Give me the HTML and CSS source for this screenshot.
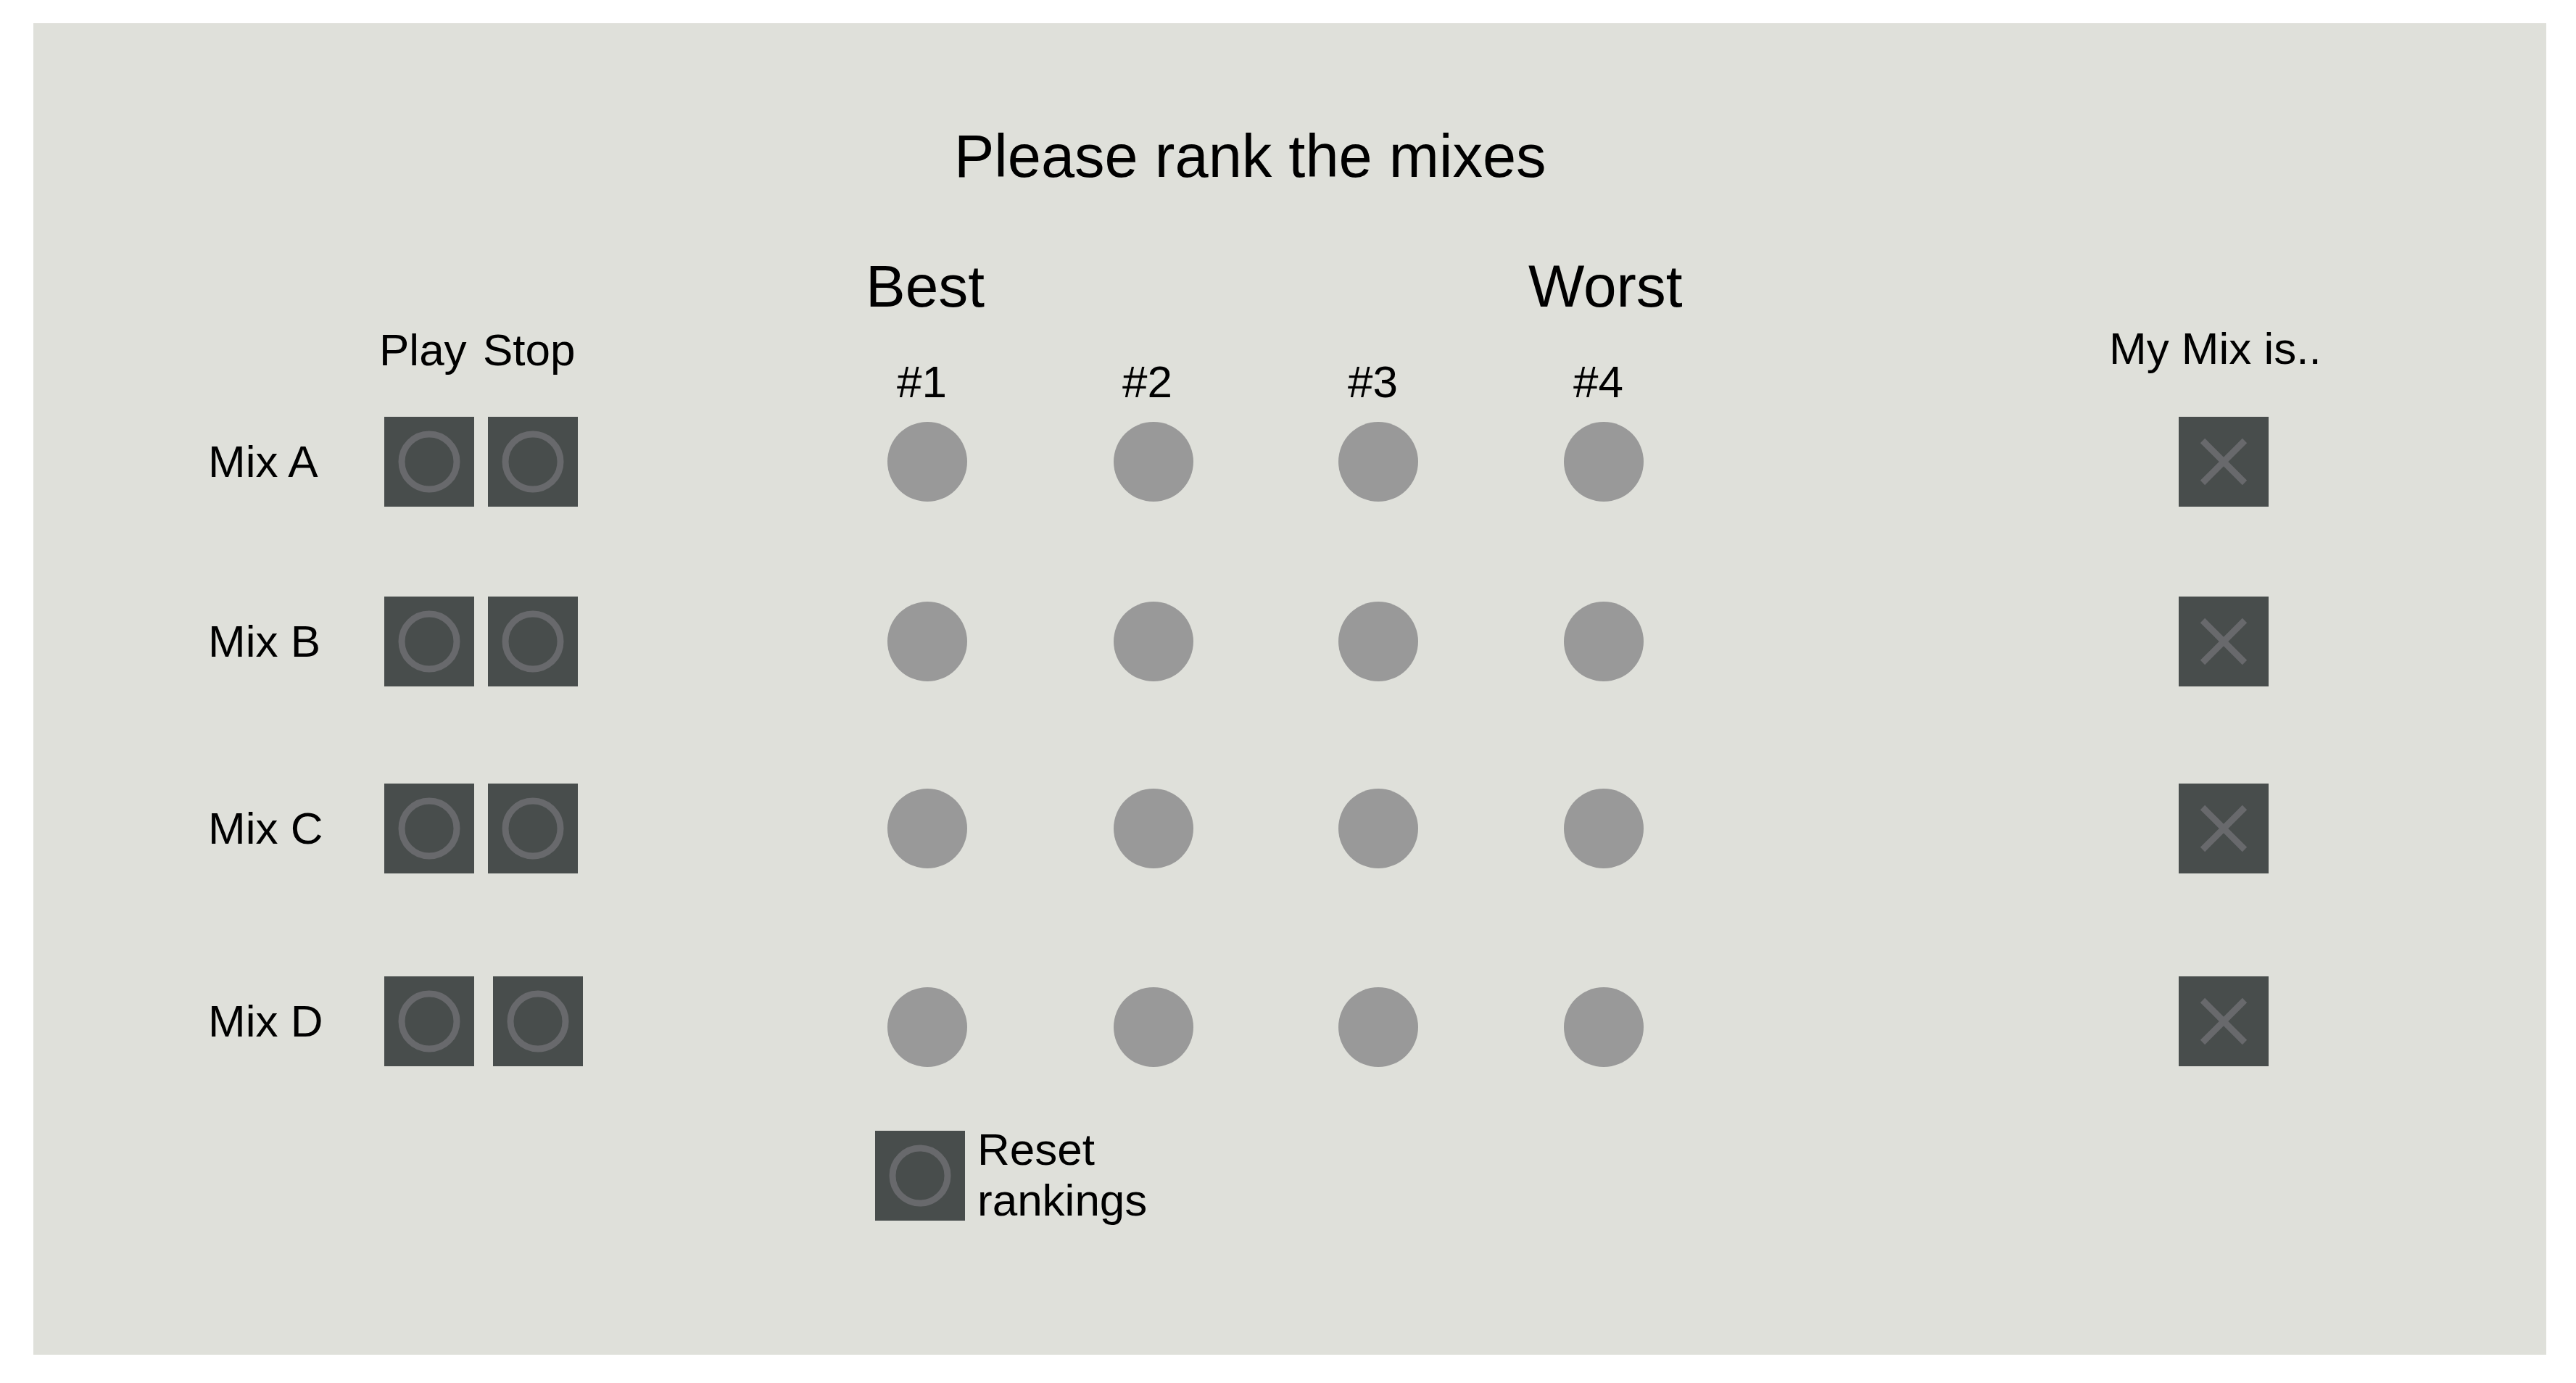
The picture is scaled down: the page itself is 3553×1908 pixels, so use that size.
FILE: index.html
```html
<!DOCTYPE html>
<html lang="en">
<head>
<meta charset="utf-8">
<title>Please rank the mixes</title>
<link rel="stylesheet" href="styles.css">
</head>
<body>
<div class="panel">
  <div class="title">Please rank the mixes</div>

  <div class="cols heads-top">
    <div class="big best">Best</div>
    <div class="big worst">Worst</div>
  </div>

  <div class="cols heads">
    <div class="lbl ctl play-lbl">Play</div>
    <div class="lbl ctl stop-lbl">Stop</div>
    <div class="lbl rank r1">#1</div>
    <div class="lbl rank r2">#2</div>
    <div class="lbl rank r3">#3</div>
    <div class="lbl rank r4">#4</div>
    <div class="lbl mymix">My Mix is..</div>
  </div>

  <div class="rows">
    <div class="cols mixrow">
      <div class="lbl mixname">Mix A</div>
      <div class="btn play"><svg viewBox="0 0 124 124"><circle cx="62" cy="62" r="38"/></svg></div>
      <div class="btn stop"><svg viewBox="0 0 124 124"><circle cx="62" cy="62" r="38"/></svg></div>
      <div class="dot r1"></div>
      <div class="dot r2"></div>
      <div class="dot r3"></div>
      <div class="dot r4"></div>
      <div class="btn xbtn"><svg viewBox="0 0 124 124"><path d="M33 33 L91 91 M91 33 L33 91"/></svg></div>
    </div>

    <div class="cols mixrow">
      <div class="lbl mixname">Mix B</div>
      <div class="btn play"><svg viewBox="0 0 124 124"><circle cx="62" cy="62" r="38"/></svg></div>
      <div class="btn stop"><svg viewBox="0 0 124 124"><circle cx="62" cy="62" r="38"/></svg></div>
      <div class="dot r1"></div>
      <div class="dot r2"></div>
      <div class="dot r3"></div>
      <div class="dot r4"></div>
      <div class="btn xbtn"><svg viewBox="0 0 124 124"><path d="M33 33 L91 91 M91 33 L33 91"/></svg></div>
    </div>

    <div class="cols mixrow">
      <div class="lbl mixname">Mix C</div>
      <div class="btn play"><svg viewBox="0 0 124 124"><circle cx="62" cy="62" r="38"/></svg></div>
      <div class="btn stop"><svg viewBox="0 0 124 124"><circle cx="62" cy="62" r="38"/></svg></div>
      <div class="dot r1"></div>
      <div class="dot r2"></div>
      <div class="dot r3"></div>
      <div class="dot r4"></div>
      <div class="btn xbtn"><svg viewBox="0 0 124 124"><path d="M33 33 L91 91 M91 33 L33 91"/></svg></div>
    </div>

    <div class="cols mixrow">
      <div class="lbl mixname">Mix D</div>
      <div class="btn play"><svg viewBox="0 0 124 124"><circle cx="62" cy="62" r="38"/></svg></div>
      <div class="btn stop"><svg viewBox="0 0 124 124"><circle cx="62" cy="62" r="38"/></svg></div>
      <div class="dot r1"></div>
      <div class="dot r2"></div>
      <div class="dot r3"></div>
      <div class="dot r4"></div>
      <div class="btn xbtn"><svg viewBox="0 0 124 124"><path d="M33 33 L91 91 M91 33 L33 91"/></svg></div>
    </div>
  </div>

  <div class="reset">
    <div class="btn"><svg viewBox="0 0 124 124"><circle cx="62" cy="62" r="38"/></svg></div>
    <div class="lbl reset-lbl">Reset<br>rankings</div>
  </div>
</div>
</body>
</html>
```

FILE: styles.css
```css
html, body {
  margin: 0;
  padding: 0;
  background: #ffffff;
}

body {
  font-family: "Liberation Sans", Arial, Helvetica, sans-serif;
  color: #000;
}

.panel {
  box-sizing: border-box;
  width: 3466px;
  height: 1837px;
  margin: 32px 0 0 46px;
  padding: 138px 0 0 240px;
  background: #dfe0da;
}

.title {
  font-size: 83px;
  line-height: 92px;
  margin: 0 0 88px 1030px;
  white-space: nowrap;
}

.cols {
  display: grid;
  grid-template-columns: 244px 143px 124px 427px 311px 311px 311px 848px 124px;
}

.heads-top {
  height: 98px;
  align-items: start;
}

.big {
  font-size: 82px;
  line-height: 90px;
  white-space: nowrap;
}

.best {
  grid-column: 5;
  margin-left: -30px;
}

.worst {
  grid-column: 8;
  margin-left: -49px;
}

.heads {
  height: 114px;
}

.lbl {
  font-size: 62px;
  line-height: 70px;
  white-space: nowrap;
}

.ctl {
  align-self: start;
  margin-left: -7px;
}

.play-lbl { grid-column: 2; }
.stop-lbl { grid-column: 3; }

.rank {
  align-self: end;
  margin-left: 13px;
}

.r1 { grid-column: 5; }
.r2 { grid-column: 6; }
.r3 { grid-column: 7; }
.r4 { grid-column: 8; }

.mymix {
  grid-column: 9;
  align-self: start;
  margin-left: -96px;
  margin-top: -2px;
}

.rows {
  margin-top: 13px;
}

.mixrow {
  height: 124px;
  align-items: center;
  justify-items: start;
}

.mixrow:nth-child(2) { margin-top: 124px; }
.mixrow:nth-child(3) { margin-top: 134px; }
.mixrow:nth-child(4) { margin-top: 141px; }

.mixname {
  grid-column: 1;
  margin-left: 1px;
}

.btn {
  width: 124px;
  height: 124px;
  background: #484d4c;
}

.btn svg {
  display: block;
  width: 124px;
  height: 124px;
}

.btn circle {
  fill: none;
  stroke: #68696c;
  stroke-width: 9;
}

.btn path {
  fill: none;
  stroke: #68696c;
  stroke-width: 9;
}

.play { grid-column: 2; }
.stop { grid-column: 3; }
.xbtn { grid-column: 9; }

.mixrow:nth-child(4) .stop {
  margin-left: 7px;
}

.mixrow:nth-child(4) .dot {
  margin-top: 16px;
}

.dot {
  width: 110px;
  height: 110px;
  border-radius: 50%;
  background: #999999;
}

.mixrow .dot.r2 { margin-left: 1px; }

.reset {
  display: flex;
  align-items: flex-start;
  gap: 17px;
  margin: 90px 0 0 921px;
}

.reset-lbl {
  margin-top: -9px;
}
```
